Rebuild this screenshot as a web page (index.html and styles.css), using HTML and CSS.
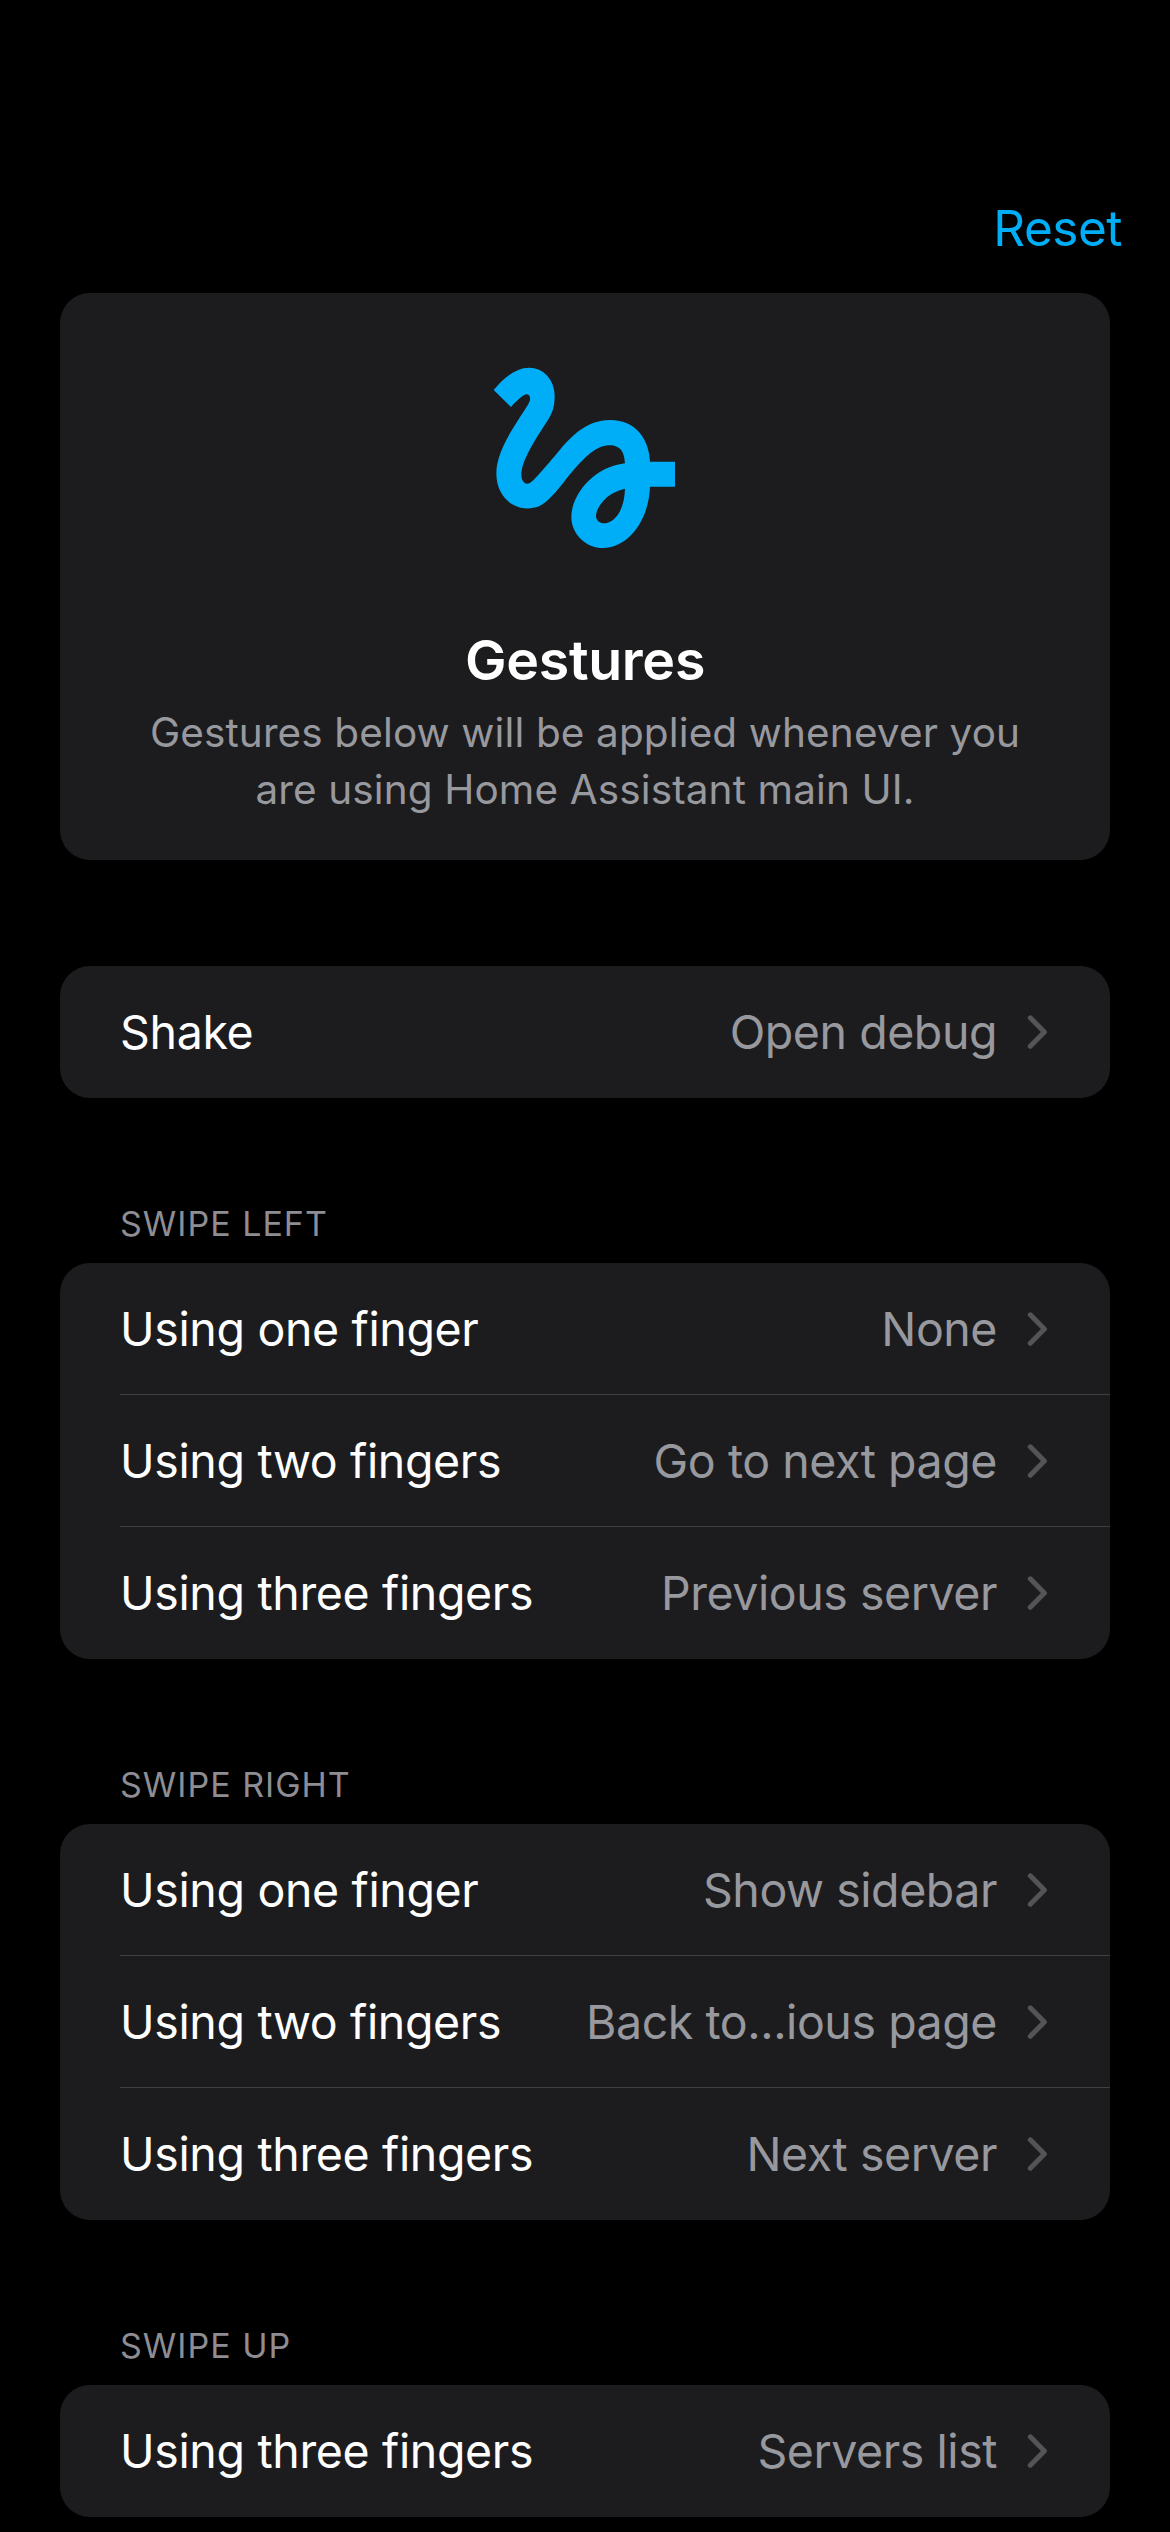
FILE: index.html
```html
<!DOCTYPE html>
<html lang="en">
<head>
<meta charset="utf-8">
<title>Gestures</title>
<link rel="stylesheet" href="styles.css">
</head>
<body>
<svg class="defs" aria-hidden="true">
  <symbol id="chevron" viewBox="0 0 22 36">
    <path d="M3.3 3.8 17.4 18 3.3 32.2" fill="none" stroke="currentColor" stroke-width="5" stroke-linecap="round" stroke-linejoin="round"/>
  </symbol>
</svg>
<nav class="nav"><a class="reset">Reset</a></nav>
<main class="page">
  <header class="card hero">
    <svg class="hero-icon" viewBox="0 0 750 690" aria-hidden="true">
      <path fill="currentColor" fill-rule="evenodd" d="M153 201 101 150C130 114 168 83 207 83C250 83 284 118 284 168C284 213 272 228 243 272C215 315 184 370 184 403C184 420 191 431 201 431C214 431 226 414 240 399C256 381 280 353 300 329C332 291 380 240 450 240C530 240 567 300 570 365H645V440H570C565 555 495 624 430 624C378 624 334 583 334 530C334 470 395 382 495 370C493 340 485 316 447 316C405 316 365 361 320 415C290 455 262 488 237 499C175 522 109 480 109 400C109 340 155 270 175 239C192 213 207 192 210 180C212 168 205 163 201 163C190 163 170 182 153 201ZM495 446C440 457 408 502 408 528C408 540 418 550 432 550C455 550 492 525 495 446Z"/>
    </svg>
    <h1 class="title">Gestures</h1>
    <p class="description">Gestures below will be applied whenever you<br>are using Home Assistant main UI.</p>
  </header>

  <section class="card first">
    <div class="row"><span class="label">Shake</span><span class="value">Open debug</span><svg class="chevron"><use href="#chevron"/></svg></div>
  </section>

  <h2 class="heading">SWIPE LEFT</h2>
  <section class="card">
    <div class="row"><span class="label">Using one finger</span><span class="value">None</span><svg class="chevron"><use href="#chevron"/></svg></div>
    <div class="row"><span class="label">Using two fingers</span><span class="value">Go to next page</span><svg class="chevron"><use href="#chevron"/></svg></div>
    <div class="row"><span class="label">Using three fingers</span><span class="value">Previous server</span><svg class="chevron"><use href="#chevron"/></svg></div>
  </section>

  <h2 class="heading">SWIPE RIGHT</h2>
  <section class="card">
    <div class="row"><span class="label">Using one finger</span><span class="value">Show sidebar</span><svg class="chevron"><use href="#chevron"/></svg></div>
    <div class="row"><span class="label">Using two fingers</span><span class="value">Back to...ious page</span><svg class="chevron"><use href="#chevron"/></svg></div>
    <div class="row"><span class="label">Using three fingers</span><span class="value">Next server</span><svg class="chevron"><use href="#chevron"/></svg></div>
  </section>

  <h2 class="heading">SWIPE UP</h2>
  <section class="card">
    <div class="row"><span class="label">Using three fingers</span><span class="value">Servers list</span><svg class="chevron"><use href="#chevron"/></svg></div>
  </section>
</main>
</body>
</html>
```
FILE: styles.css
```css
* {
  box-sizing: border-box;
  margin: 0;
  padding: 0;
}

body {
  width: 1170px;
  height: 2532px;
  overflow: hidden;
  background: #000;
  color: #fff;
  font-family: Inter, "Liberation Sans", sans-serif;
}

.defs {
  display: none;
}

.nav {
  display: flex;
  justify-content: flex-end;
  height: 293px;
  padding: 198px 48px 0 0;
}

.reset {
  color: #00aef8;
  font-size: 49.5px;
  line-height: 60px;
  letter-spacing: -0.5px;
}

.page {
  padding: 0 60px;
}

.card {
  overflow: hidden;
  border-radius: 30px;
  background: #1c1c1e;
}

.hero {
  display: flex;
  flex-direction: column;
  align-items: center;
  height: 567px;
  padding-top: 47px;
}

.hero-icon {
  width: 250px;
  height: 230px;
  color: #00aef8;
}

.title {
  margin-top: 57px;
  font-size: 55.5px;
  font-weight: 600;
  line-height: 66px;
  letter-spacing: -0.3px;
}

.description {
  margin-top: 11px;
  color: #98989f;
  font-size: 40.5px;
  line-height: 57px;
  letter-spacing: 0.12px;
  text-align: center;
}

.first {
  margin-top: 106px;
}

.heading {
  display: flex;
  align-items: flex-end;
  height: 165px;
  padding: 0 60px 18px;
  color: #8d8d93;
  font-size: 34px;
  font-weight: 400;
  line-height: 42px;
  letter-spacing: 1px;
}

.row {
  display: flex;
  align-items: center;
  height: 132px;
  margin-left: 60px;
  padding-right: 61px;
  border-bottom: 1px solid #404043;
  font-size: 46.5px;
  line-height: 132px;
  letter-spacing: -0.35px;
}

.row:last-child {
  border-bottom-color: transparent;
}

.label {
  flex: 1;
}

.value {
  color: #98989f;
  letter-spacing: -0.45px;
}

.chevron {
  width: 22px;
  height: 36px;
  margin-left: 30px;
  color: #545456;
}
```
